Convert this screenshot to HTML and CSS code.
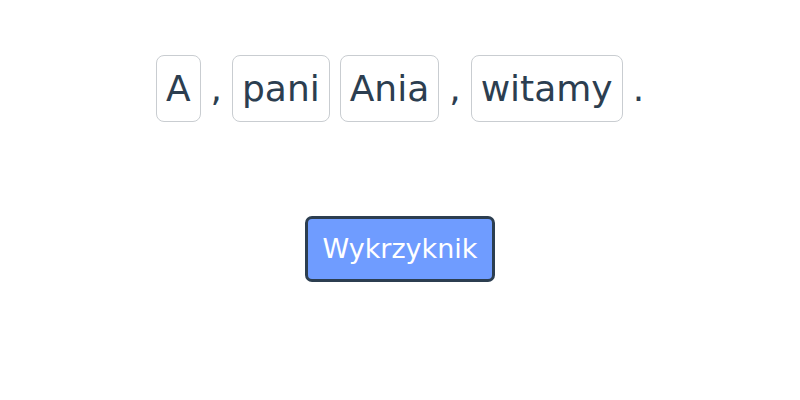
FILE: index.html
```html
<!DOCTYPE html>
<html lang="pl">
<head>
  <meta charset="UTF-8">
  <title>Zdanie</title>
  <link rel="stylesheet" href="styles.css">
</head>
<body>
  <div id="app">
    <div class="sentence">
      <span class="word">A</span>
      <span class="punct">,</span>
      <span class="word">pani</span>
      <span class="word">Ania</span>
      <span class="punct">,</span>
      <span class="word">witamy</span>
      <span class="punct">.</span>
    </div>
    <button class="action-btn">Wykrzyknik</button>
  </div>
</body>
</html>
```

FILE: styles.css
```css
body {
  margin: 0;
  font-family: "DejaVu Sans", sans-serif;
  color: #2c3e50;
  background: #fff;
}
#app {
  display: flex;
  flex-direction: column;
  align-items: center;
  padding-top: 55px;
}
.sentence {
  display: flex;
  align-items: center;
  gap: 10px;
  font-size: 36px;
}
.word {
  padding: 12px 9px;
  border: 1px solid #c9cdd1;
  border-radius: 8px;
}
.action-btn {
  margin-top: 94px;
  padding: 14px 15px;
  font-family: "DejaVu Sans", sans-serif;
  font-size: 27px;
  line-height: 32px;
  color: #fff;
  background: #6f9cff;
  border: 3px solid #2c3e50;
  border-radius: 7px;
}
```
